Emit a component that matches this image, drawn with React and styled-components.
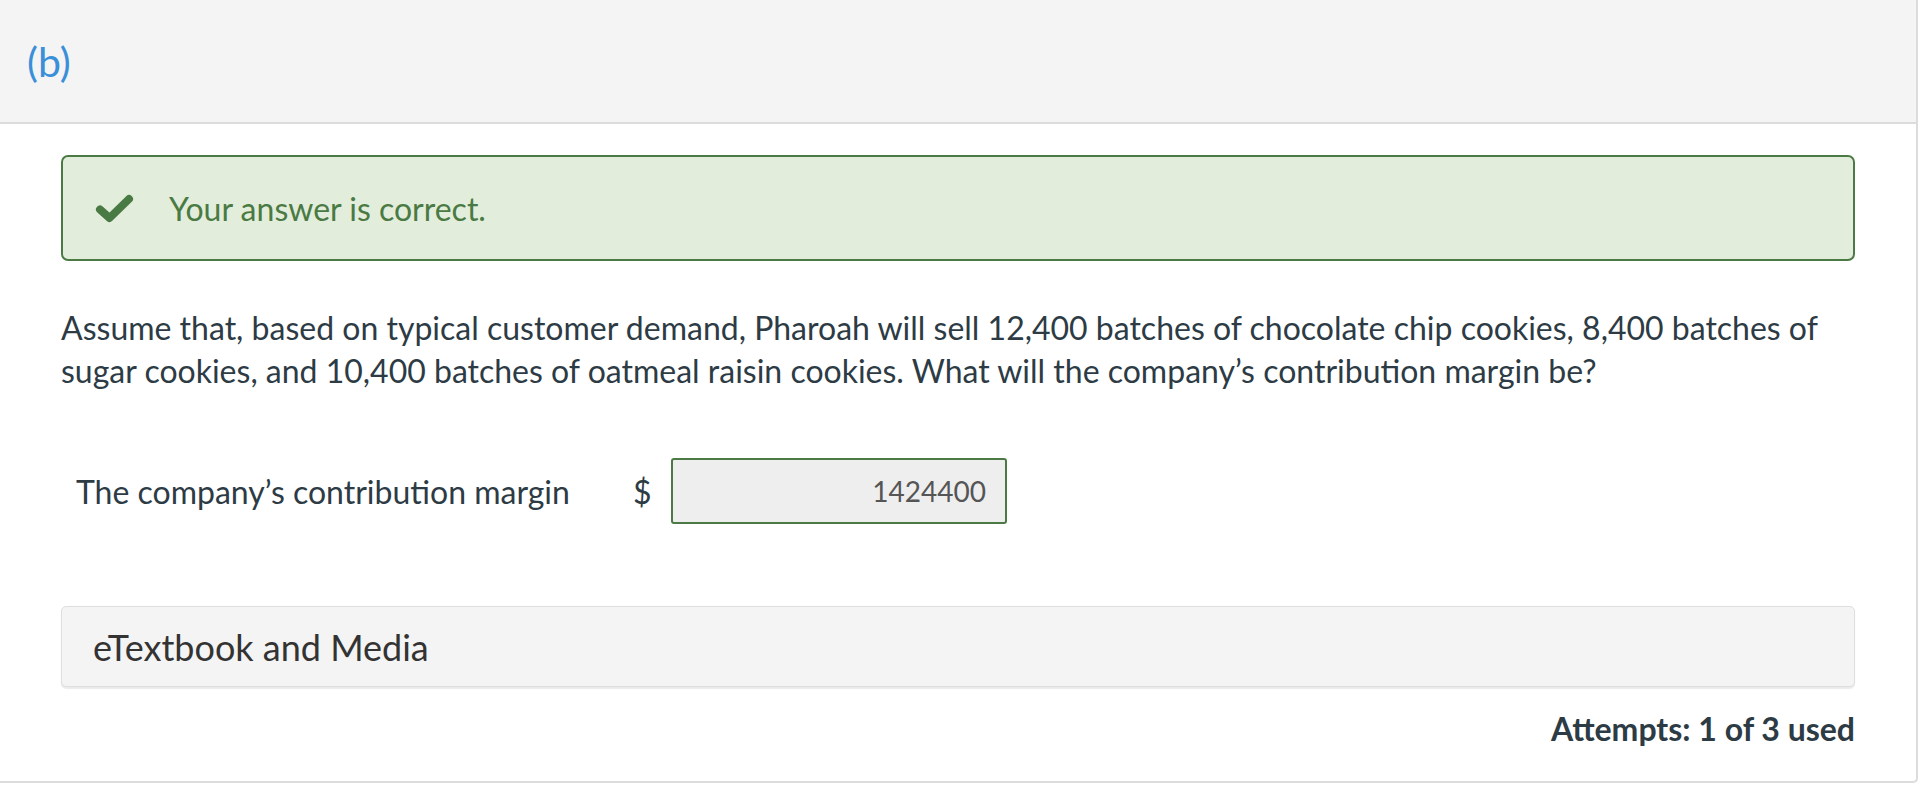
import React from 'react';
import styled, { createGlobalStyle } from 'styled-components';

const GlobalStyle = createGlobalStyle`
  html, body {
    margin: 0;
    padding: 0;
    background: #fff;
    font-family: Lato, "Open Sans", sans-serif;
    color: #2d3b45;
    overflow: hidden;
  }
`;

const Card = styled.div`
  width: 1916px;
  height: 781px;
  border-right: 2px solid #dcdcdc;
  border-bottom: 2px solid #dcdcdc;
  border-bottom-right-radius: 5px;
  display: flex;
  flex-direction: column;
`;

const Header = styled.div`
  height: 122px;
  background: #f4f4f4;
  border-bottom: 2px solid #dcdcdc;
  display: flex;
  align-items: center;
  padding-left: 27px;
  box-sizing: content-box;
`;

const Part = styled.span`
  font-size: 41px;
  color: #3a8fd9;
  line-height: 1;
`;

const Body = styled.div`
  padding: 31px 61px 0 61px;
  display: flex;
  flex-direction: column;
`;

const Feedback = styled.div`
  height: 106px;
  box-sizing: border-box;
  border: 2px solid #4c7a45;
  border-radius: 7px;
  background: #e2eddb;
  display: flex;
  align-items: center;
  padding-left: 32px;
  gap: 35px;
  color: #4a7a43;
  font-size: 32px;
`;

const Question = styled.p`
  margin: 45px 0 0 0;
  font-size: 32px;
  line-height: 43px;
  color: #2d3b45;
`;

const AnswerRow = styled.div`
  margin-top: 66px;
  display: flex;
  align-items: center;
  padding-left: 15px;
  font-size: 32px;
`;

const Label = styled.span`
  width: 557px;
  color: #2d3b45;
`;

const Currency = styled.span`
  width: 38px;
  color: #2d3b45;
`;

const Input = styled.div`
  width: 336px;
  height: 66px;
  box-sizing: border-box;
  border: 2px solid #4c7a45;
  border-radius: 3px;
  background: #eeeeee;
  display: flex;
  align-items: center;
  justify-content: flex-end;
  padding-right: 19px;
  color: #555;
  font-size: 28px;
`;

const Resources = styled.div`
  margin-top: 82px;
  height: 81px;
  box-sizing: border-box;
  border: 1px solid #dedede;
  border-radius: 5px;
  background: #f4f4f4;
  box-shadow: 0 2px 1px rgba(0, 0, 0, 0.08);
  display: flex;
  align-items: center;
  padding-left: 31px;
  font-size: 36px;
  color: #333;
`;

const Attempts = styled.div`
  margin-top: 22px;
  text-align: right;
  font-size: 32px;
  font-weight: 700;
  color: #2d3b45;
`;

const Check = () => (
  <svg width="39" height="29" viewBox="0 0 39 29">
    <path
      d="M5 15.5 L14.5 24 L34 5"
      fill="none"
      stroke="#4a7a43"
      strokeWidth="8"
      strokeLinecap="round"
      strokeLinejoin="round"
    />
  </svg>
);

export default function App() {
  return (
    <>
      <GlobalStyle />
      <Card>
        <Header>
          <Part>(b)</Part>
        </Header>
        <Body>
          <Feedback>
            <Check />
            <span>Your answer is correct.</span>
          </Feedback>
          <Question>
            Assume that, based on typical customer demand, Pharoah will sell 12,400 batches of chocolate chip cookies, 8,400 batches of sugar cookies, and 10,400 batches of oatmeal raisin cookies. What will the company’s contribution margin be?
          </Question>
          <AnswerRow>
            <Label>The company’s contribution margin</Label>
            <Currency>$</Currency>
            <Input>1424400</Input>
          </AnswerRow>
          <Resources>eTextbook and Media</Resources>
          <Attempts>Attempts: 1 of 3 used</Attempts>
        </Body>
      </Card>
    </>
  );
}
